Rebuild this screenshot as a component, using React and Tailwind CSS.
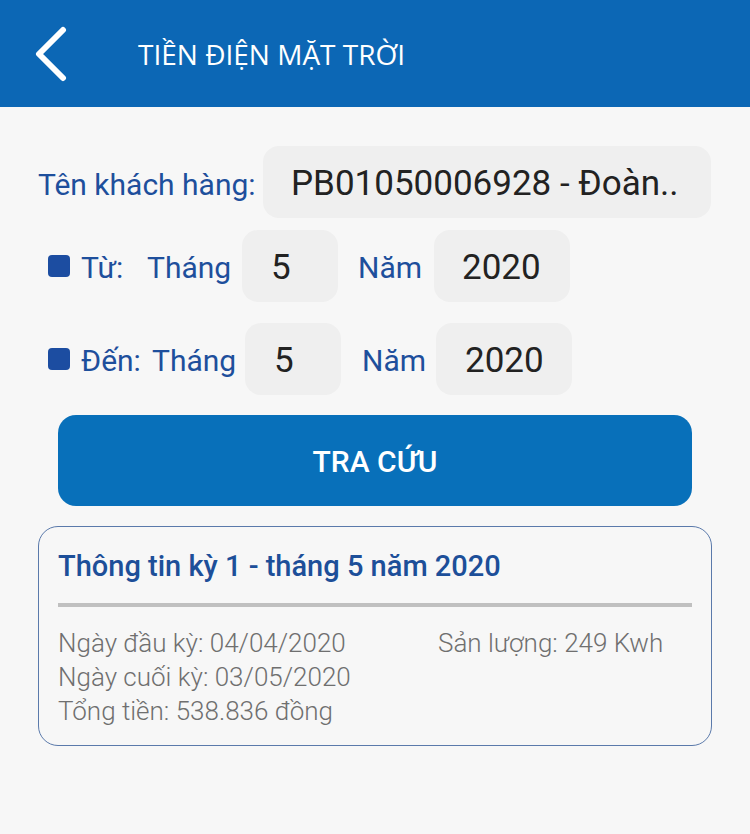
import React from 'react';

function Box({ children, className }) {
  return (
    <div className={`h-[72px] rounded-[16px] bg-[#efefef] flex items-center pt-[4px] text-[35px] text-[#222] ${className}`}>
      {children}
    </div>
  );
}

export default function App() {
  return (
    <div className="w-[750px] h-[834px] bg-[#f7f7f7] font-['Roboto',sans-serif] overflow-hidden">
      {/* Header */}
      <div className="h-[107px] bg-[#0c67b5] flex items-center">
        <svg className="ml-[33px] w-[36px] h-[56px]" viewBox="0 0 36 56" fill="none">
          <path d="M30 4 L6 28 L30 52" stroke="white" strokeWidth="6" strokeLinecap="round" strokeLinejoin="round" />
        </svg>
        <h1 className="ml-[69px] text-white text-[28px] font-['Open_Sans',sans-serif]">TIỀN ĐIỆN MẶT TRỜI</h1>
      </div>

      {/* Customer */}
      <div className="flex items-center mt-[39px] pl-[38px]">
        <span className="text-[30px] text-[#1e4f9c] w-[225px] pt-[4px]">Tên khách hàng:</span>
        <Box className="w-[448px] pl-[28px] whitespace-nowrap">PB01050006928 - Đoàn..</Box>
      </div>

      {/* From */}
      <div className="flex items-center mt-[12px] pl-[48px]">
        <span className="w-[22px] h-[22px] rounded-[4px] bg-[#1c4da1]" />
        <span className="ml-[11px] text-[30px] text-[#1e4f9c] w-[66px] pt-[2px]">Từ:</span>
        <span className="text-[30px] text-[#1e4f9c] w-[95px] pt-[2px]">Tháng</span>
        <Box className="w-[96px] pl-[29px]">5</Box>
        <span className="ml-[20px] text-[30px] text-[#1e4f9c] w-[76px] pt-[2px]">Năm</span>
        <Box className="w-[136px] pl-[28px]">2020</Box>
      </div>

      {/* To */}
      <div className="flex items-center mt-[21px] pl-[48px]">
        <span className="w-[22px] h-[22px] rounded-[4px] bg-[#1c4da1]" />
        <span className="ml-[11px] text-[30px] text-[#1e4f9c] w-[71px] pt-[2px]">Đến:</span>
        <span className="text-[30px] text-[#1e4f9c] w-[93px] pt-[2px]">Tháng</span>
        <Box className="w-[96px] pl-[29px]">5</Box>
        <span className="ml-[21px] text-[30px] text-[#1e4f9c] w-[74px] pt-[2px]">Năm</span>
        <Box className="w-[136px] pl-[29px]">2020</Box>
      </div>

      {/* Button */}
      <button className="mt-[20px] ml-[58px] w-[634px] h-[91px] rounded-[18px] bg-[#0870ba] text-white text-[30px] font-medium flex items-center justify-center pt-[2px]">
        TRA CỨU
      </button>

      {/* Card */}
      <div className="mt-[20px] ml-[38px] w-[674px] h-[220px] rounded-[20px] border border-[#5b7aab] px-[19px] pt-[19px]">
        <div className="text-[29px] font-medium text-[#1d4f99] leading-[40px]">Thông tin kỳ 1 - tháng 5 năm 2020</div>
        <div className="mt-[17px] h-[4px] bg-[#c0c0c0]" />
        <div className="mt-[19px] grid grid-cols-[380px_1fr] text-[26px] font-light text-[#6f6f6f] leading-[34px]">
          <div>
            <div>Ngày đầu kỳ: 04/04/2020</div>
            <div>Ngày cuối kỳ: 03/05/2020</div>
            <div>Tổng tiền: 538.836 đồng</div>
          </div>
          <div>Sản lượng: 249 Kwh</div>
        </div>
      </div>
    </div>
  );
}
